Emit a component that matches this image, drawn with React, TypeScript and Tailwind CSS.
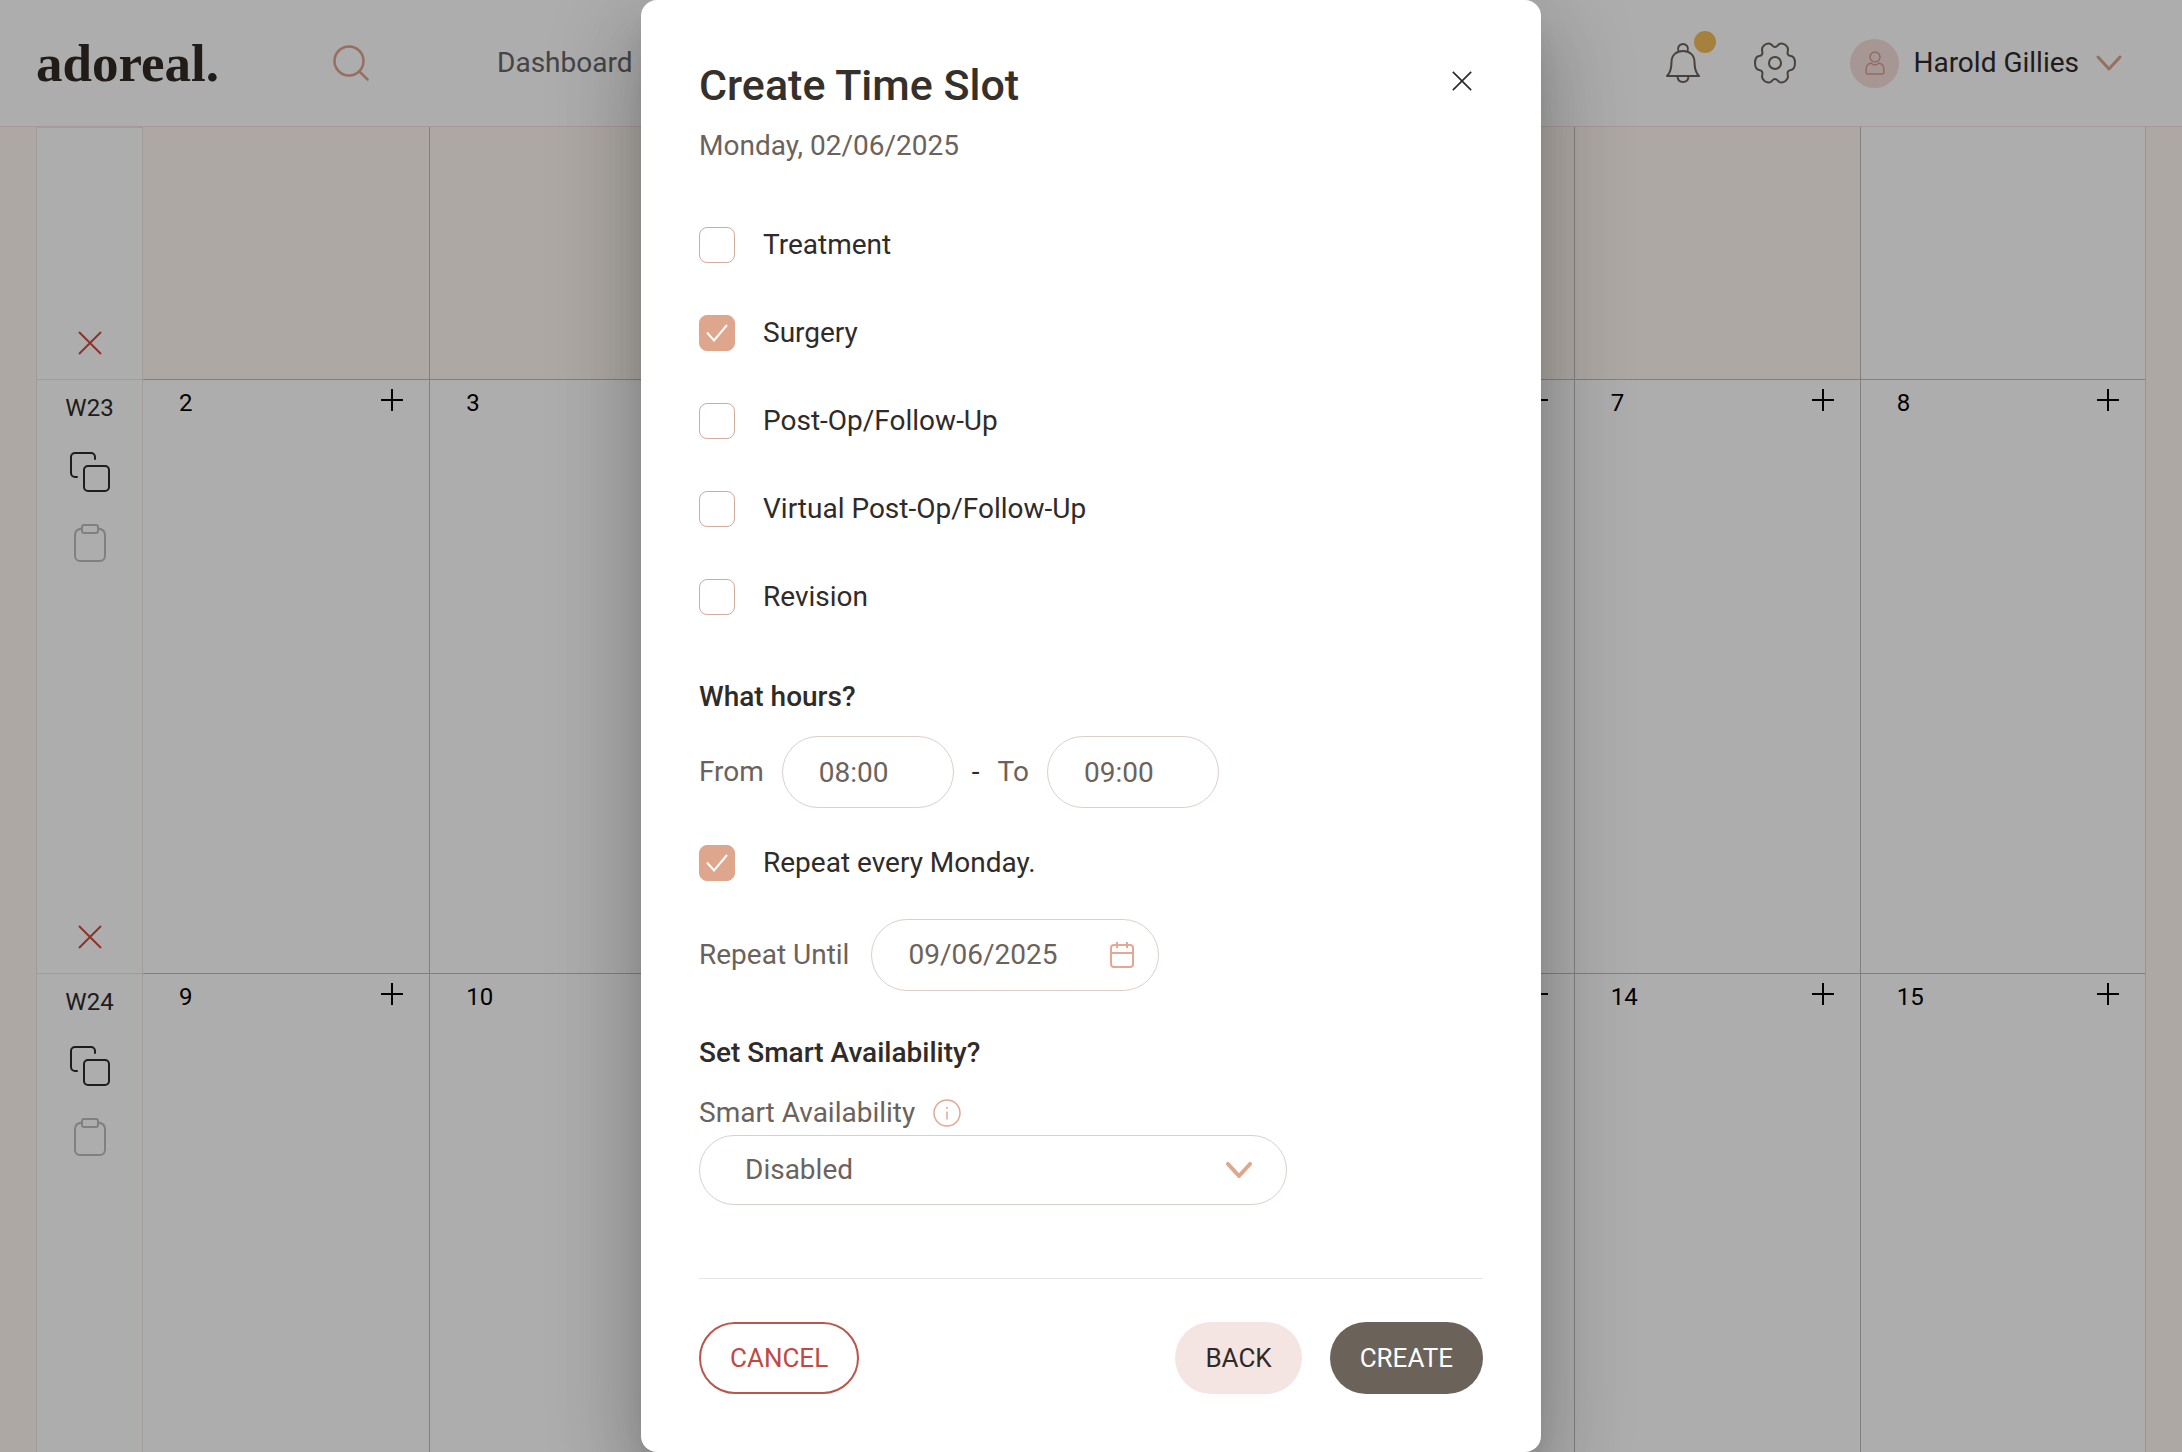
import React, { useState } from 'react';

const WEEKS = [
  { label: 'W23', days: [2, 3, 4, 5, 6, 7, 8] },
  { label: 'W24', days: [9, 10, 11, 12, 13, 14, 15] },
];

const SLOT_TYPES = ['Treatment', 'Surgery', 'Post-Op/Follow-Up', 'Virtual Post-Op/Follow-Up', 'Revision'];

// one quarter of the gear outline, mirrored into the other three
const GEAR_QUARTER = 'M0-16C2-16 2.5-17.5 4-18.7C6-20.2 8.5-19.5 10.5-18C13-16 13.5-14 12.7-11.5C12.2-9.5 13-7.5 15-7.2C18-6.900 20-4.200 20 0';

function PlusIcon() {
  return (
    <svg className="size-[22px]" viewBox="0 0 22 22" fill="none" stroke="currentColor" strokeWidth="2">
      <path d="M11 0v22M0 11h22" />
    </svg>
  );
}

function CrossIcon({ className }: { className: string }) {
  return (
    <svg className={className} viewBox="0 0 24 24" fill="none" stroke="currentColor" strokeWidth="2">
      <path d="M1 1l22 22M23 1L1 23" />
    </svg>
  );
}

function CopyIcon() {
  return (
    <svg className="size-10" viewBox="0 0 40 40" fill="none" stroke="currentColor" strokeWidth="2" strokeLinecap="round">
      <path d="M7 25H5a4 4 0 0 1-4-4V5a4 4 0 0 1 4-4h16a4 4 0 0 1 4 4v2" />
      <rect x="14" y="14" width="25" height="25" rx="4" />
    </svg>
  );
}

function PasteIcon() {
  return (
    <svg className="h-10 w-8" viewBox="0 0 32 40" fill="none" stroke="currentColor" strokeWidth="2">
      <path d="M8 4.500C4 5 1 7 1 11v21a5 5 0 0 0 5 5h20a5 5 0 0 0 5-5V11c0-4-3-6-7-6.500" />
      <rect x="8" y="1" width="16" height="8" rx="2" />
    </svg>
  );
}

function GearIcon() {
  return (
    <svg className="size-[42px]" viewBox="-21 -21 42 42" fill="none" stroke="currentColor" strokeWidth="2">
      <path d={GEAR_QUARTER} />
      <path d={GEAR_QUARTER} transform="scale(-1 1)" />
      <path d={GEAR_QUARTER} transform="scale(1 -1)" />
      <path d={GEAR_QUARTER} transform="scale(-1 -1)" />
      <circle r="6" />
    </svg>
  );
}

function ChevronIcon({ className }: { className: string }) {
  return (
    <svg className={className} viewBox="0 0 26 16" fill="none" stroke="currentColor" strokeLinecap="round" strokeLinejoin="round">
      <path d="M2 2l11 12L24 2" />
    </svg>
  );
}

function Header() {
  return (
    <header className="flex h-[127px] items-center border-b border-[#f4e4dc] bg-white pr-[60px] pl-9">
      <a href="#" className="font-['Liberation_Serif',serif] text-[53px] leading-[60px] font-bold text-[#332a26]">
        adoreal.
      </a>
      <button aria-label="Search" className="ml-[114px] text-[#dfa48c]">
        <svg className="size-9" viewBox="0 0 36 36" fill="none" stroke="currentColor" strokeWidth="2.5" strokeLinecap="round">
          <circle cx="16" cy="16" r="14.5" />
          <path d="M27 27l7.500 7.500" />
        </svg>
      </button>
      <nav className="ml-32 text-[28px] text-[#666]">
        <a href="#">Dashboard</a>
      </nav>
      <div className="ml-auto flex items-center">
        <button aria-label="Notifications" className="relative text-[#6b625a]">
          <svg className="h-10 w-[34px]" viewBox="0 0 34 40" fill="none" stroke="currentColor" strokeWidth="2" strokeLinejoin="round">
            <path d="M12.500 8.500C11 4 13.500 1 17 1s6 3 4.500 7.500" />
            <path d="M1 33c4-4 4.500-8 4.500-14 0-7 5-11 11.500-11s11.500 4 11.500 11c0 6 .5 10 4.500 14z" />
            <path d="M11.500 33c0 3.500 2 6 5.500 6s5.500-2.500 5.500-6" />
          </svg>
          <span className="absolute -top-3 -right-4 size-[22px] rounded-full bg-[#f5bf5b]" />
        </button>
        <button aria-label="Settings" className="ml-[54px] text-[#6b625a]">
          <GearIcon />
        </button>
        <button className="ml-[54px] flex items-center text-[28px] text-[#2f2b28]">
          <span className="flex size-[49px] items-center justify-center rounded-full bg-[#f6dfda] text-[#dc9d92]">
            <svg className="h-6 w-5" viewBox="0 0 20 24" fill="none" stroke="currentColor" strokeWidth="1.5" strokeLinejoin="round">
              <circle cx="10" cy="6" r="5" />
              <path d="M6 12c-4 1-5 3-5 9 0 1.500.5 2 2 2h14c1.500 0 2-.5 2-2 0-6-1-8-5-9-2 2.500-6 2.500-8 0z" />
            </svg>
          </span>
          <span className="ml-[14px]">Harold Gillies</span>
          <ChevronIcon className="ml-[17px] h-4 w-[26px] stroke-3 text-[#dfa48c]" />
        </button>
      </div>
    </header>
  );
}

function WeekControls({ label }: { label?: string }) {
  return (
    <div className="flex flex-col items-center border-x border-t border-[#f0e6e1] bg-white pt-3 pb-6 text-[#2f2b28]">
      {label && (
        <>
          <span className="text-2xl leading-8">{label}</span>
          <button aria-label="Copy week" className="mt-7">
            <CopyIcon />
          </button>
          <button aria-label="Paste week" className="mt-8 text-[#bdbdbd]">
            <PasteIcon />
          </button>
        </>
      )}
      <button aria-label="Clear week" className="mt-auto text-[#d04a3f]">
        <CrossIcon className="size-6" />
      </button>
    </div>
  );
}

const CELL = 'border-t border-l border-[#bdbdbd] nth-[8n+2]:border-l-0 nth-[8n]:border-r nth-[8n]:border-r-[#e5d9d0]';

function DayCell({ day }: { day: number }) {
  return (
    <div className={`${CELL} flex items-start justify-between bg-white pt-[7px] pr-[26px] pl-9 text-2xl leading-8 text-black`}>
      <span>{day}</span>
      <button aria-label={`Add time slot on ${day}`} className="pt-[2px]">
        <PlusIcon />
      </button>
    </div>
  );
}

function Calendar() {
  return (
    <main className="min-h-0 flex-1 overflow-hidden px-9">
      <div className="grid grid-cols-[107px_repeat(7,minmax(0,1fr))] grid-rows-[252px_594px_594px]">
        {/* rest of the previous week, scrolled under the header */}
        <WeekControls />
        {[0, 1, 2, 3, 4, 5, 6].map((i) => (
          <div key={i} className={`${CELL} ${i < 6 ? 'bg-[#fff8f0]' : 'bg-white'} border-t-0`} />
        ))}
        {WEEKS.map((week) => (
          <React.Fragment key={week.label}>
            <WeekControls label={week.label} />
            {week.days.map((day) => (
              <DayCell key={day} day={day} />
            ))}
          </React.Fragment>
        ))}
      </div>
    </main>
  );
}

interface CheckRowProps {
  label: string;
  checked: boolean;
  onChange: () => void;
}

function CheckRow({ label, checked, onChange }: CheckRowProps) {
  return (
    <label className="flex items-center gap-7 text-[#2f2b28]">
      <span className="grid size-9 place-items-center">
        <input
          type="checkbox"
          checked={checked}
          onChange={onChange}
          className="col-start-1 row-start-1 size-9 appearance-none rounded-lg border border-[#d3aa9c] bg-white checked:border-[#dfa68e] checked:bg-[#dfa68e]"
        />
        {checked && (
          <svg className="pointer-events-none col-start-1 row-start-1 h-5 w-6" viewBox="0 0 24 20" fill="none" stroke="white" strokeWidth="2">
            <path d="M2 9.500l7 8L22 2" />
          </svg>
        )}
      </span>
      <span>{label}</span>
    </label>
  );
}

function TimeSlotDialog() {
  const [types, setTypes] = useState<string[]>(['Surgery']);
  const [repeat, setRepeat] = useState(true);

  const toggleType = (type: string) => {
    setTypes(types.includes(type) ? types.filter((t) => t !== type) : [...types, type]);
  };

  return (
    <form
      role="dialog"
      aria-label="Create Time Slot"
      onSubmit={(e) => e.preventDefault()}
      className="flex min-h-full w-[900px] flex-col rounded-2xl bg-white px-[58px] pt-[60px] pb-[58px] text-[28px] leading-9 text-[#6b635b] shadow-[0_22px_30px_-14px_rgba(0,0,0,0.2),0_48px_76px_6px_rgba(0,0,0,0.14),0_18px_92px_16px_rgba(0,0,0,0.12)]"
    >
      <div className="flex items-start justify-between">
        <h1 className="text-[43px] leading-[50px] font-medium text-[#36302b]">Create Time Slot</h1>
        <button type="button" aria-label="Close" className="p-[11px] text-[#2f2b28]">
          <CrossIcon className="size-5" />
        </button>
      </div>
      <p className="mt-[18px]">Monday, 02/06/2025</p>

      <div className="mt-[63px] flex flex-col gap-[52px]">
        {SLOT_TYPES.map((type) => (
          <CheckRow key={type} label={type} checked={types.includes(type)} onChange={() => toggleType(type)} />
        ))}
      </div>

      <h2 className="mt-16 font-medium text-[#2f2b28]">What hours?</h2>
      <div className="mt-[21px] flex items-center">
        <label htmlFor="from">From</label>
        <input id="from" defaultValue="08:00" className="ml-[18px] h-[72px] w-[172px] rounded-full border border-[#dccfca] px-9" />
        <span className="mx-[18px] text-[#2f2b28]">-</span>
        <label htmlFor="to">To</label>
        <input id="to" defaultValue="09:00" className="ml-[18px] h-[72px] w-[172px] rounded-full border border-[#dccfca] px-9" />
      </div>

      <div className="mt-[37px]">
        <CheckRow label="Repeat every Monday." checked={repeat} onChange={() => setRepeat(!repeat)} />
      </div>
      <div className="mt-[38px] flex items-center gap-[22px]">
        <label htmlFor="until">Repeat Until</label>
        <div className="flex h-[72px] w-72 items-center justify-between rounded-full border border-[#dccfca] pr-6 pl-9">
          <input id="until" defaultValue="09/06/2025" className="w-40 min-w-0" />
          <svg className="h-[26px] w-6 text-[#e3a794]" viewBox="0 0 24 26" fill="none" stroke="currentColor" strokeWidth="2">
            <rect x="1" y="3" width="22" height="22" rx="3" />
            <path d="M1 11h22M7 0v6M17 0v6" />
          </svg>
        </div>
      </div>

      <h2 className="mt-11 font-medium text-[#2f2b28]">Set Smart Availability?</h2>
      <div className="mt-6 flex items-center gap-[18px]">
        <label htmlFor="smart">Smart Availability</label>
        <svg className="size-7 text-[#e3a794]" viewBox="0 0 28 28" fill="none" stroke="currentColor" strokeWidth="1.5">
          <circle cx="14" cy="14" r="13" />
          <path d="M14 12.500v8M14 8v2" />
        </svg>
      </div>
      <div className="mt-1 grid w-[588px] items-center">
        <select id="smart" className="col-start-1 row-start-1 h-[70px] appearance-none rounded-full border border-[#dccfca] pr-20 pl-[45px]">
          <option>Disabled</option>
          <option>Enabled</option>
        </select>
        <ChevronIcon className="pointer-events-none col-start-1 row-start-1 mr-[35px] h-4 w-[26px] justify-self-end stroke-4 text-[#dfa68e]" />
      </div>

      <div className="mt-auto flex items-center gap-7 border-t border-[#e8e6e5] pt-[43px] text-[26px]">
        <button type="button" className="mr-auto h-[72px] rounded-full border-2 border-[#b9564c] px-[29px] text-[#c04a42]">
          CANCEL
        </button>
        <button type="button" className="h-[72px] rounded-full bg-[#f4e5e3] px-[30px] text-[#2f2b28]">
          BACK
        </button>
        <button type="submit" className="h-[72px] rounded-full bg-[#6b625a] px-[30px] text-white">
          CREATE
        </button>
      </div>
    </form>
  );
}

export default function App() {
  return (
    <div className="relative font-['Roboto',sans-serif]">
      <div className="flex h-screen flex-col bg-[#fff8f0]">
        <Header />
        <Calendar />
      </div>
      <div className="absolute inset-0 flex justify-center bg-black/32">
        <TimeSlotDialog />
      </div>
    </div>
  );
}
